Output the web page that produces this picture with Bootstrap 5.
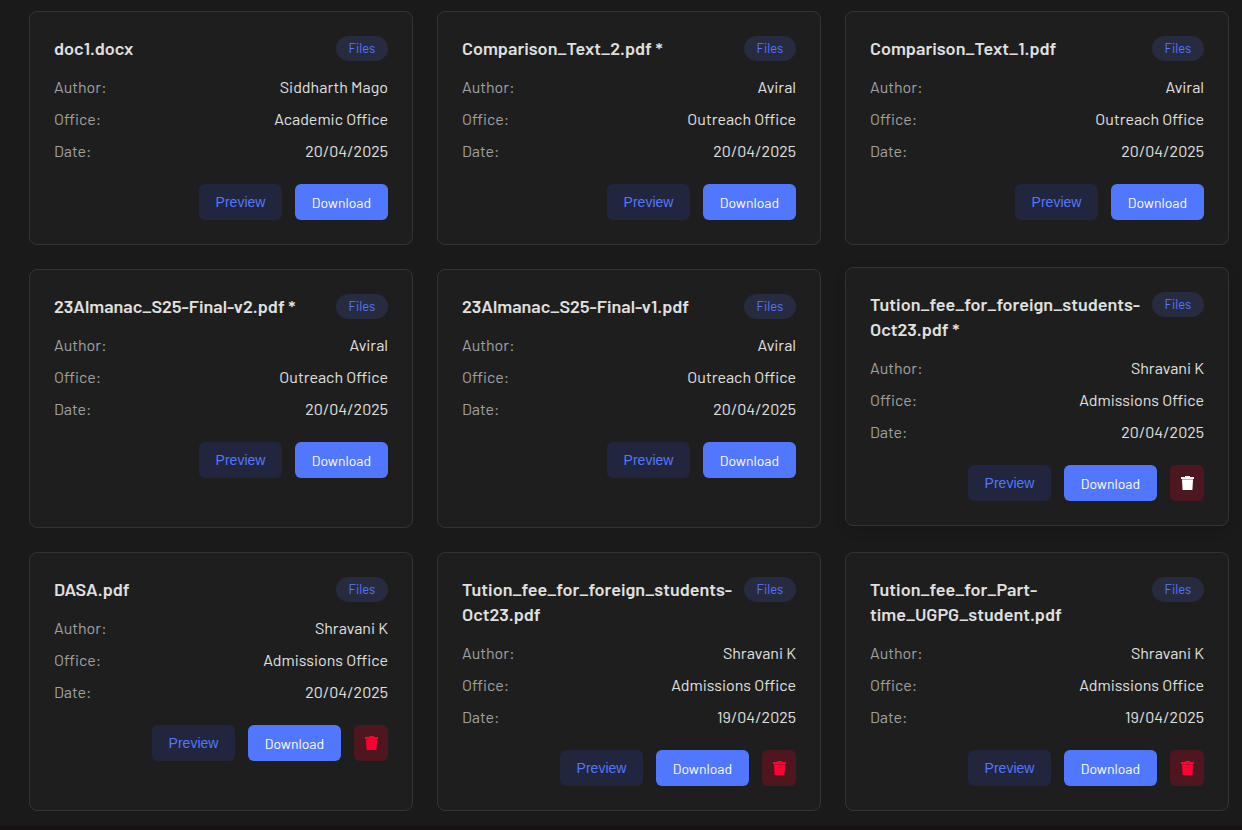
<!DOCTYPE html>
<html lang="en" data-bs-theme="dark">
<head>
<meta charset="utf-8">
<meta name="viewport" content="width=device-width, initial-scale=1">
<title>Documents</title>
<link href="https://cdn.jsdelivr.net/npm/bootstrap@5.3.0/dist/css/bootstrap.min.css" rel="stylesheet">
<style>
  body { background: #1a1a1a; color: #e0e0e0; font-family: Barlow, Roboto, "Liberation Sans", sans-serif; }
  .doc-list { padding: 11px 13px 15px 29px; border-bottom: 4px solid #170f13; }
  .doc-list > .row { --bs-gutter-x: 24px; --bs-gutter-y: 24px; }
  .doc-card { background: #1e1e1e; border: 1px solid #333; border-radius: 8px; }
  .doc-card .card-body { padding: 24px; }
  .doc-card.is-active { transform: translateY(-2px); box-shadow: 0 4px 12px rgba(0, 0, 0, .1); }
  .doc-head { margin-bottom: 14px; }
  .doc-title { font-size: 18px; line-height: 25px; font-weight: 600; color: #e0e0e0; }
  .doc-tag { background: #272b40; color: #5277ff; font-size: 13px; font-weight: 400; line-height: 25px; padding: 0 12px; min-width: 52px; }
  .doc-meta { margin-bottom: 21px; font-size: 16px; line-height: 24px; }
  .doc-meta dt { font-weight: 400; color: #a0a0a0; }
  .doc-meta dd { color: #e0e0e0; }
  .doc-actions { gap: 13px; }
  .doc-actions .btn { height: 36px; font-size: 14px; line-height: 20px; border: 0; border-radius: 6px; padding: 8px 0; text-align: center; }
  .doc-actions .btn-preview { background: #21263e; color: #5277ff; min-width: 83px; font-family: "Liberation Sans", sans-serif; }
  .doc-actions .btn-download { background: #5277ff; color: #fff; min-width: 93px; padding: 9px 0 7px; }
  .doc-actions .btn-trash { background: #4e1720; color: #ff0033; width: 34px; }
  .doc-actions .btn-trash svg { display: block; margin: auto; }
  .doc-card.is-active .btn-trash { color: #fff; }
</style>
</head>
<body>
<svg class="d-none" aria-hidden="true">
  <symbol id="trash" viewBox="0 0 14 16">
    <path fill="currentColor" d="M5 1h5v1h4v2H1V2h4zM2 5h11l-.6 10H2.600z"/>
    <path fill="currentColor" opacity=".65" d="M2 4h11v1H2z"/>
  </symbol>
</svg>
<main class="doc-list">
  <div class="row row-cols-1 row-cols-md-2 row-cols-lg-3" id="docs"></div>
</main>
<script src="https://cdn.jsdelivr.net/npm/bootstrap@5.3.0/dist/js/bootstrap.bundle.min.js"></script>
<script>
  const docs = [
    ["doc1.docx", "Siddharth Mago", "Academic Office", "20/04/2025"],
    ["Comparison_Text_2.pdf *", "Aviral", "Outreach Office", "20/04/2025"],
    ["Comparison_Text_1.pdf", "Aviral", "Outreach Office", "20/04/2025"],
    ["23Almanac_S25-Final-v2.pdf *", "Aviral", "Outreach Office", "20/04/2025"],
    ["23Almanac_S25-Final-v1.pdf", "Aviral", "Outreach Office", "20/04/2025"],
    ["Tution_fee_for_foreign_students-<wbr>Oct23.pdf *", "Shravani K", "Admissions Office", "20/04/2025", true, true],
    ["DASA.pdf", "Shravani K", "Admissions Office", "20/04/2025", true],
    ["Tution_fee_for_foreign_students-<wbr>Oct23.pdf", "Shravani K", "Admissions Office", "19/04/2025", true],
    ["Tution_fee_for_Part-<wbr>time_UGPG_student.pdf", "Shravani K", "Admissions Office", "19/04/2025", true]
  ];
  const line = (k, v) => `<div class="d-flex justify-content-between"><dt>${k}:</dt><dd class="mb-0">${v}</dd></div>`;
  document.getElementById("docs").innerHTML = docs.map(([title, author, office, date, own, active]) => `
    <div class="col">
      <article class="card doc-card h-100 ${active ? "is-active" : ""}">
        <div class="card-body">
          <div class="doc-head d-flex justify-content-between align-items-start">
            <h2 class="doc-title mb-0">${title}</h2>
            <span class="doc-tag badge rounded-pill flex-shrink-0">Files</span>
          </div>
          <dl class="doc-meta d-flex flex-column gap-2">${line("Author", author)}${line("Office", office)}${line("Date", date)}</dl>
          <div class="doc-actions d-flex justify-content-end">
            <button type="button" class="btn btn-preview">Preview</button>
            <button type="button" class="btn btn-download">Download</button>
            ${own ? `<button type="button" class="btn btn-trash" aria-label="Delete"><svg width="14" height="16" aria-hidden="true"><use href="#trash"/></svg></button>` : ""}
          </div>
        </div>
      </article>
    </div>`).join("");
</script>
</body>
</html>
